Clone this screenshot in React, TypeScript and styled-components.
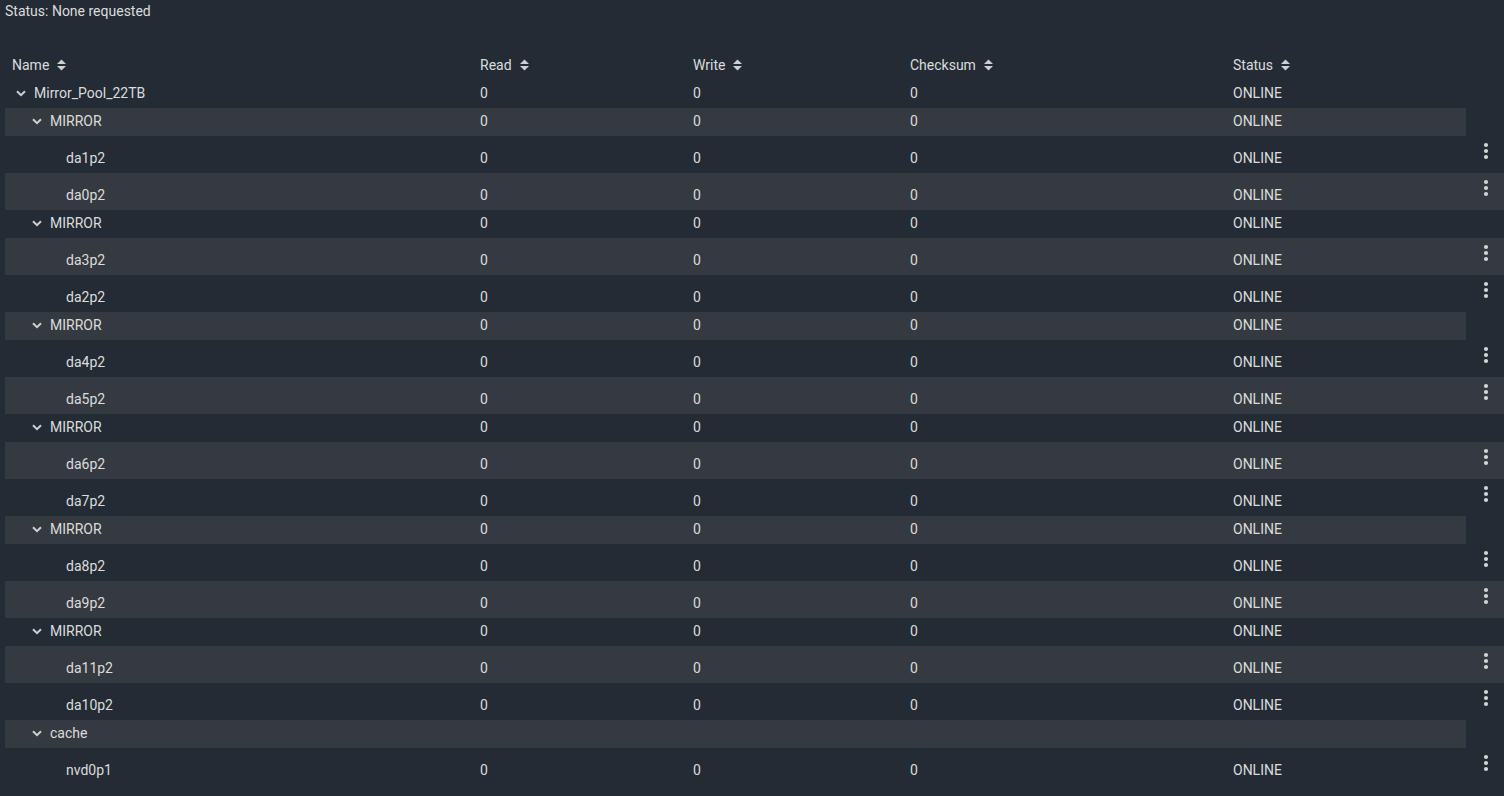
import React from "react";
import styled, { createGlobalStyle } from "styled-components";

type Node = {
  name: string;
  level: number;
  group?: boolean;
  empty?: boolean;
};

const mirror = (a: string, b: string): Node[] => [
  { name: "MIRROR", level: 1, group: true },
  { name: a, level: 2 },
  { name: b, level: 2 },
];

const rows: Node[] = [
  { name: "Mirror_Pool_22TB", level: 0, group: true },
  ...mirror("da1p2", "da0p2"),
  ...mirror("da3p2", "da2p2"),
  ...mirror("da4p2", "da5p2"),
  ...mirror("da6p2", "da7p2"),
  ...mirror("da8p2", "da9p2"),
  ...mirror("da11p2", "da10p2"),
  { name: "cache", level: 1, group: true, empty: true },
  { name: "nvd0p1", level: 2 },
];

const GlobalStyle = createGlobalStyle`
  html, body {
    margin: 0;
    background: #232b34;
  }
  body {
    font-family: Roboto, "Liberation Sans", sans-serif;
    font-size: 14px;
    color: #dcdcdc;
    overflow: hidden;
  }
`;

const SortIcon = () => (
  <SortSvg width="9" height="12" viewBox="0 0 9 12">
    <polygon points="0,5 4.5,0.5 9,5" fill="currentColor" />
    <polygon points="0,7 4.5,11.5 9,7" fill="currentColor" />
  </SortSvg>
);

const Chevron = () => (
  <ChevronSvg width="10" height="7" viewBox="0 0 10 7">
    <path d="M1 1.2 L5 5.2 L9 1.2" fill="none" stroke="currentColor" strokeWidth="2" />
  </ChevronSvg>
);

const Kebab = () => (
  <KebabSvg width="6" height="18" viewBox="0 0 6 18">
    <circle cx="3" cy="3" r="2.1" fill="currentColor" />
    <circle cx="3" cy="9" r="2.1" fill="currentColor" />
    <circle cx="3" cy="15" r="2.1" fill="currentColor" />
  </KebabSvg>
);

const columns = ["Read", "Write", "Checksum", "Status"];

export default function App() {
  return (
    <Page>
      <GlobalStyle />
      <StatusLine>Status: None requested</StatusLine>
      <HeaderRow>
        <Grid>
          <HeadCell $first>
            Name <SortIcon />
          </HeadCell>
          {columns.map((c) => (
            <HeadCell key={c}>
              {c} <SortIcon />
            </HeadCell>
          ))}
        </Grid>
      </HeaderRow>
      {rows.map((r, i) => {
        const striped = i % 2 === 1;
        return (
          <Row key={i} $disk={!r.group} $striped={striped}>
            <Grid $striped={striped}>
              <NameCell style={{ paddingLeft: 11 + r.level * 16 }}>
                {r.group ? <Chevron /> : <Spacer />}
                {r.name}
              </NameCell>
              <Cell>{r.empty ? "" : "0"}</Cell>
              <Cell>{r.empty ? "" : "0"}</Cell>
              <Cell>{r.empty ? "" : "0"}</Cell>
              <Cell>{r.empty ? "" : "ONLINE"}</Cell>
            </Grid>
            {!r.group && (
              <Action>
                <Kebab />
              </Action>
            )}
          </Row>
        );
      })}
    </Page>
  );
}

const Page = styled.div`
  padding-left: 5px;
  width: 1499px;
`;

const StatusLine = styled.div`
  height: 22px;
  line-height: 22px;
`;

const HeaderRow = styled.div`
  display: flex;
  padding-top: 30px;
  height: 28px;
  align-items: start;
`;

const Grid = styled.div<{ $striped?: boolean }>`
  display: grid;
  grid-template-columns: 475px 213px 217px 323px 233px;
  width: 1461px;
  box-sizing: border-box;
  height: 100%;
  align-items: end;
  padding-bottom: 5px;
  background: ${(p) => (p.$striped ? "#353a41" : "transparent")};
`;

const HeadCell = styled.div<{ $first?: boolean }>`
  display: flex;
  align-items: center;
  gap: 8px;
  line-height: 20px;
  padding-left: ${(p) => (p.$first ? "7px" : "0")};
`;

const SortSvg = styled.svg`
  color: #cfcfcf;
  display: block;
`;

const Row = styled.div<{ $disk: boolean; $striped: boolean }>`
  display: flex;
  align-items: start;
  height: ${(p) => (p.$disk ? "37px" : "28px")};
  background: ${(p) => (p.$disk && p.$striped ? "#353a41" : "transparent")};
`;

const Cell = styled.div`
  line-height: 20px;
  display: flex;
  align-items: center;
`;

const NameCell = styled(Cell)`
  gap: 8px;
`;

const ChevronSvg = styled.svg`
  color: #d0d0d0;
  display: block;
`;

const Spacer = styled.span`
  width: 10px;
`;

const Action = styled.div`
  width: 38px;
  display: flex;
  justify-content: center;
  padding-top: 6px;
  padding-left: 2px;
`;

const KebabSvg = styled.svg`
  color: #d4d4d4;
  display: block;
`;
